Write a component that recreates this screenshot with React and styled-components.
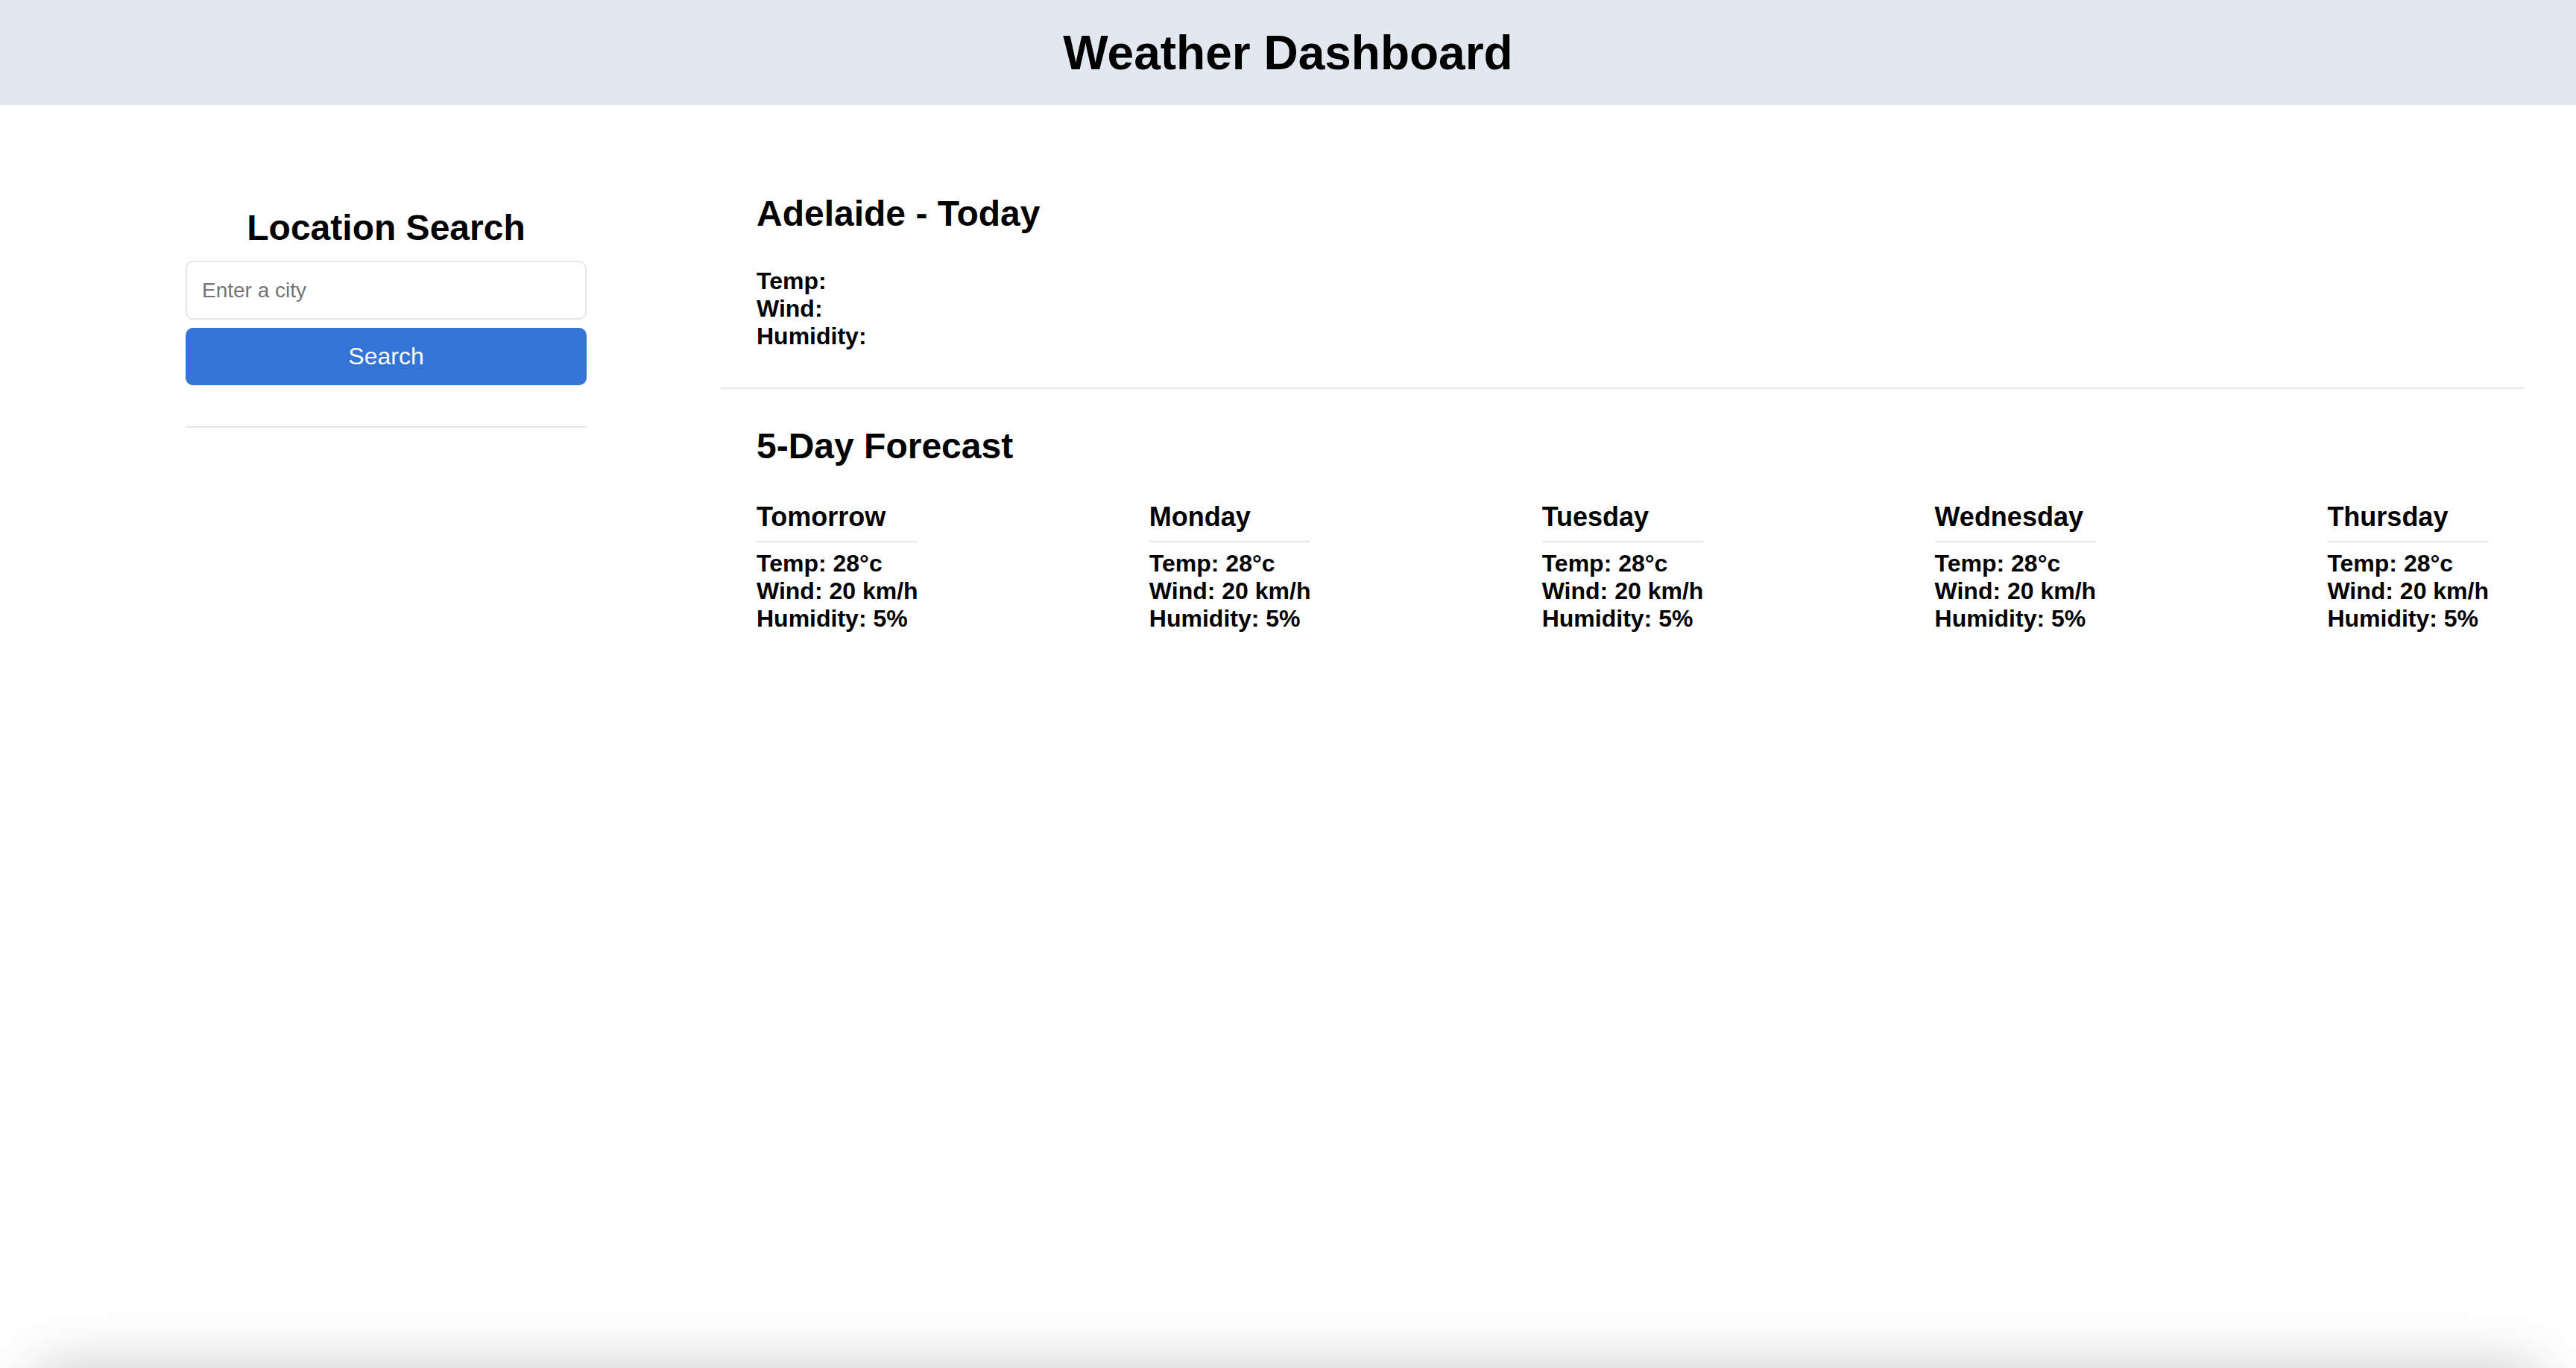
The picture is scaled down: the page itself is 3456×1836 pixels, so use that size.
import React from "react";
import styled, { createGlobalStyle } from "styled-components";

const GlobalStyle = createGlobalStyle`
  html, body {
    margin: 0;
    padding: 0;
    background: #ffffff;
  }

  body {
    font-family: "Liberation Sans", Arial, Helvetica, sans-serif;
    color: #000000;
    overflow: hidden;
  }

  * {
    box-sizing: border-box;
  }
`;

const divider = "#e5e7eb";

const Page = styled.div`
  min-height: 100vh;
`;

const Header = styled.header`
  display: flex;
  align-items: center;
  justify-content: center;
  height: 141px;
  background: #e2e8f0;
`;

const Title = styled.h1`
  margin: 0;
  font-size: 64px;
  font-weight: 700;
  line-height: normal;
`;

const Layout = styled.main`
  display: grid;
  grid-template-columns: 898px 1fr;
  padding: 0 69px;
`;

const Sidebar = styled.aside`
  display: flex;
  flex-direction: column;
  width: 538px;
  margin: 0 auto;
  padding-top: 137px;
`;

const SideTitle = styled.h2`
  margin: 0 0 17px;
  font-size: 48px;
  font-weight: 700;
  line-height: normal;
  text-align: center;
`;

const CityInput = styled.input`
  height: 79px;
  margin-bottom: 11px;
  padding: 0 20px;
  border: 2px solid ${divider};
  border-radius: 10px;
  font-family: inherit;
  font-size: 28px;
  color: #000;
  outline: none;

  &::placeholder {
    color: #757575;
  }
`;

const SearchButton = styled.button`
  height: 77px;
  border: none;
  border-radius: 10px;
  background: #3474d4;
  color: #ffffff;
  font-family: inherit;
  font-size: 32px;
  cursor: pointer;
`;

const Rule = styled.hr`
  margin: 55px 0 0;
  height: 2px;
  border: none;
  background: ${divider};
`;

const Content = styled.section`
  display: flex;
  flex-direction: column;
`;

const Panel = styled.div`
  padding: ${(p) => p.$pad};
  border-bottom: ${(p) => (p.$ruled ? `2px solid ${divider}` : "none")};
`;

const PanelTitle = styled.h2`
  margin: 0 0 ${(p) => p.$gap}px;
  font-size: 48px;
  font-weight: 700;
  line-height: normal;
`;

const Stats = styled.div`
  display: flex;
  flex-direction: column;
  font-size: 32px;
  font-weight: 700;
  line-height: normal;
`;

const ForecastRow = styled.div`
  display: flex;
  justify-content: space-between;
  align-items: flex-start;
`;

const DayCard = styled.article`
  display: flex;
  flex-direction: column;
`;

const DayName = styled.h3`
  margin: 0 0 10px;
  padding-bottom: 11px;
  border-bottom: 2px solid ${divider};
  font-size: 36px;
  font-weight: 700;
  line-height: normal;
`;

// footer sits just under the fold; only its shadow shows
const BottomShade = styled.footer`
  position: fixed;
  left: 40px;
  right: 40px;
  top: 100vh;
  height: 80px;
  border-radius: 40px;
  box-shadow: 0 0 80px rgba(0, 0, 0, 0.22);
`;

const forecast = [
  { day: "Tomorrow", temp: "28°c", wind: "20 km/h", humidity: "5%" },
  { day: "Monday", temp: "28°c", wind: "20 km/h", humidity: "5%" },
  { day: "Tuesday", temp: "28°c", wind: "20 km/h", humidity: "5%" },
  { day: "Wednesday", temp: "28°c", wind: "20 km/h", humidity: "5%" },
  { day: "Thursday", temp: "28°c", wind: "20 km/h", humidity: "5%" },
];

export default function App() {
  return (
    <Page>
      <GlobalStyle />
      <Header>
        <Title>Weather Dashboard</Title>
      </Header>

      <Layout>
        <Sidebar>
          <SideTitle>Location Search</SideTitle>
          <CityInput type="text" placeholder="Enter a city" />
          <SearchButton type="button">Search</SearchButton>
          <Rule />
        </Sidebar>

        <Content>
          <Panel $pad="118px 48px 50px" $ruled>
            <PanelTitle $gap={45}>Adelaide - Today</PanelTitle>
            <Stats>
              <span>Temp:</span>
              <span>Wind:</span>
              <span>Humidity:</span>
            </Stats>
          </Panel>

          <Panel $pad="49px 48px 0">
            <PanelTitle $gap={47}>5-Day Forecast</PanelTitle>
            <ForecastRow>
              {forecast.map((f) => (
                <DayCard key={f.day}>
                  <DayName>{f.day}</DayName>
                  <Stats>
                    <span>Temp: {f.temp}</span>
                    <span>Wind: {f.wind}</span>
                    <span>Humidity: {f.humidity}</span>
                  </Stats>
                </DayCard>
              ))}
            </ForecastRow>
          </Panel>
        </Content>
      </Layout>

      <BottomShade />
    </Page>
  );
}
